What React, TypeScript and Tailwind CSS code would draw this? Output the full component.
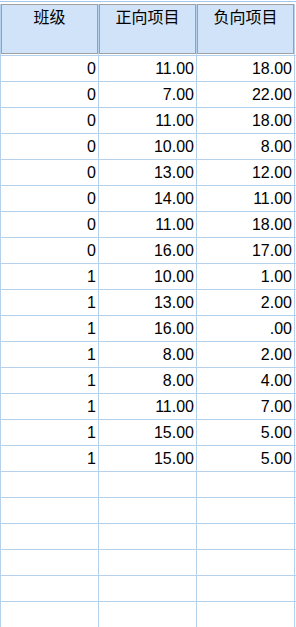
import React from "react";

const rows: [string, string, string][] = [
  ["0", "11.00", "18.00"],
  ["0", "7.00", "22.00"],
  ["0", "11.00", "18.00"],
  ["0", "10.00", "8.00"],
  ["0", "13.00", "12.00"],
  ["0", "14.00", "11.00"],
  ["0", "11.00", "18.00"],
  ["0", "16.00", "17.00"],
  ["1", "10.00", "1.00"],
  ["1", "13.00", "2.00"],
  ["1", "16.00", ".00"],
  ["1", "8.00", "2.00"],
  ["1", "8.00", "4.00"],
  ["1", "11.00", "7.00"],
  ["1", "15.00", "5.00"],
  ["1", "15.00", "5.00"],
  ["", "", ""],
  ["", "", ""],
  ["", "", ""],
  ["", "", ""],
  ["", "", ""],
  ["", "", ""],
  ["", "", ""],
];

const headers = ["班级", "正向项目", "负向项目"];

export default function App() {
  return (
    <div
      className="w-[296px] h-[627px] overflow-hidden bg-white flex flex-col"
      style={{ fontFamily: '"Liberation Sans", Arial, sans-serif' }}
    >
      {/* top strip */}
      <div className="h-[4px] shrink-0 flex flex-col">
        <div className="h-[1px] shrink-0 bg-white" />
        <div className="h-[1px] shrink-0 bg-[#a6c6ea]" />
      </div>
      {/* header */}
      <div className="flex h-[51px] shrink-0">
        <div className="w-[1px] bg-[#b6d1ec]" />
        {headers.map((h) => (
          <div key={h} className="w-[98px] flex shrink-0">
            <div
              className="w-[97px] h-[50px] border border-[#a0a0a0] bg-[#d0e3f8] text-center text-[16px] leading-[16px] pt-[3px] text-black"
              style={{ fontFamily: '"Noto Sans CJK SC", "Noto Sans", sans-serif' }}
            >
              {h}
            </div>
            <div className="w-[1px] h-full bg-[#b6d1ec]" />
          </div>
        ))}
        <div className="flex-1" />
      </div>
      {/* data */}
      <div className="flex flex-col shrink-0 border-t border-[#b6d1ec]">
        {rows.map((r, i) => (
          <div key={i} className="flex h-[26px] shrink-0 border-b border-[#b6d1ec]">
            <div className="w-[1px] bg-[#b6d1ec]" />
            {r.map((c, j) => (
              <div
                key={j}
                className="w-[98px] shrink-0 border-r border-[#b6d1ec] flex items-center justify-end pr-[2px] text-[16px] leading-[16px] text-black"
              >
                {c}
              </div>
            ))}
            <div className="flex-1" />
          </div>
        ))}
      </div>
    </div>
  );
}
